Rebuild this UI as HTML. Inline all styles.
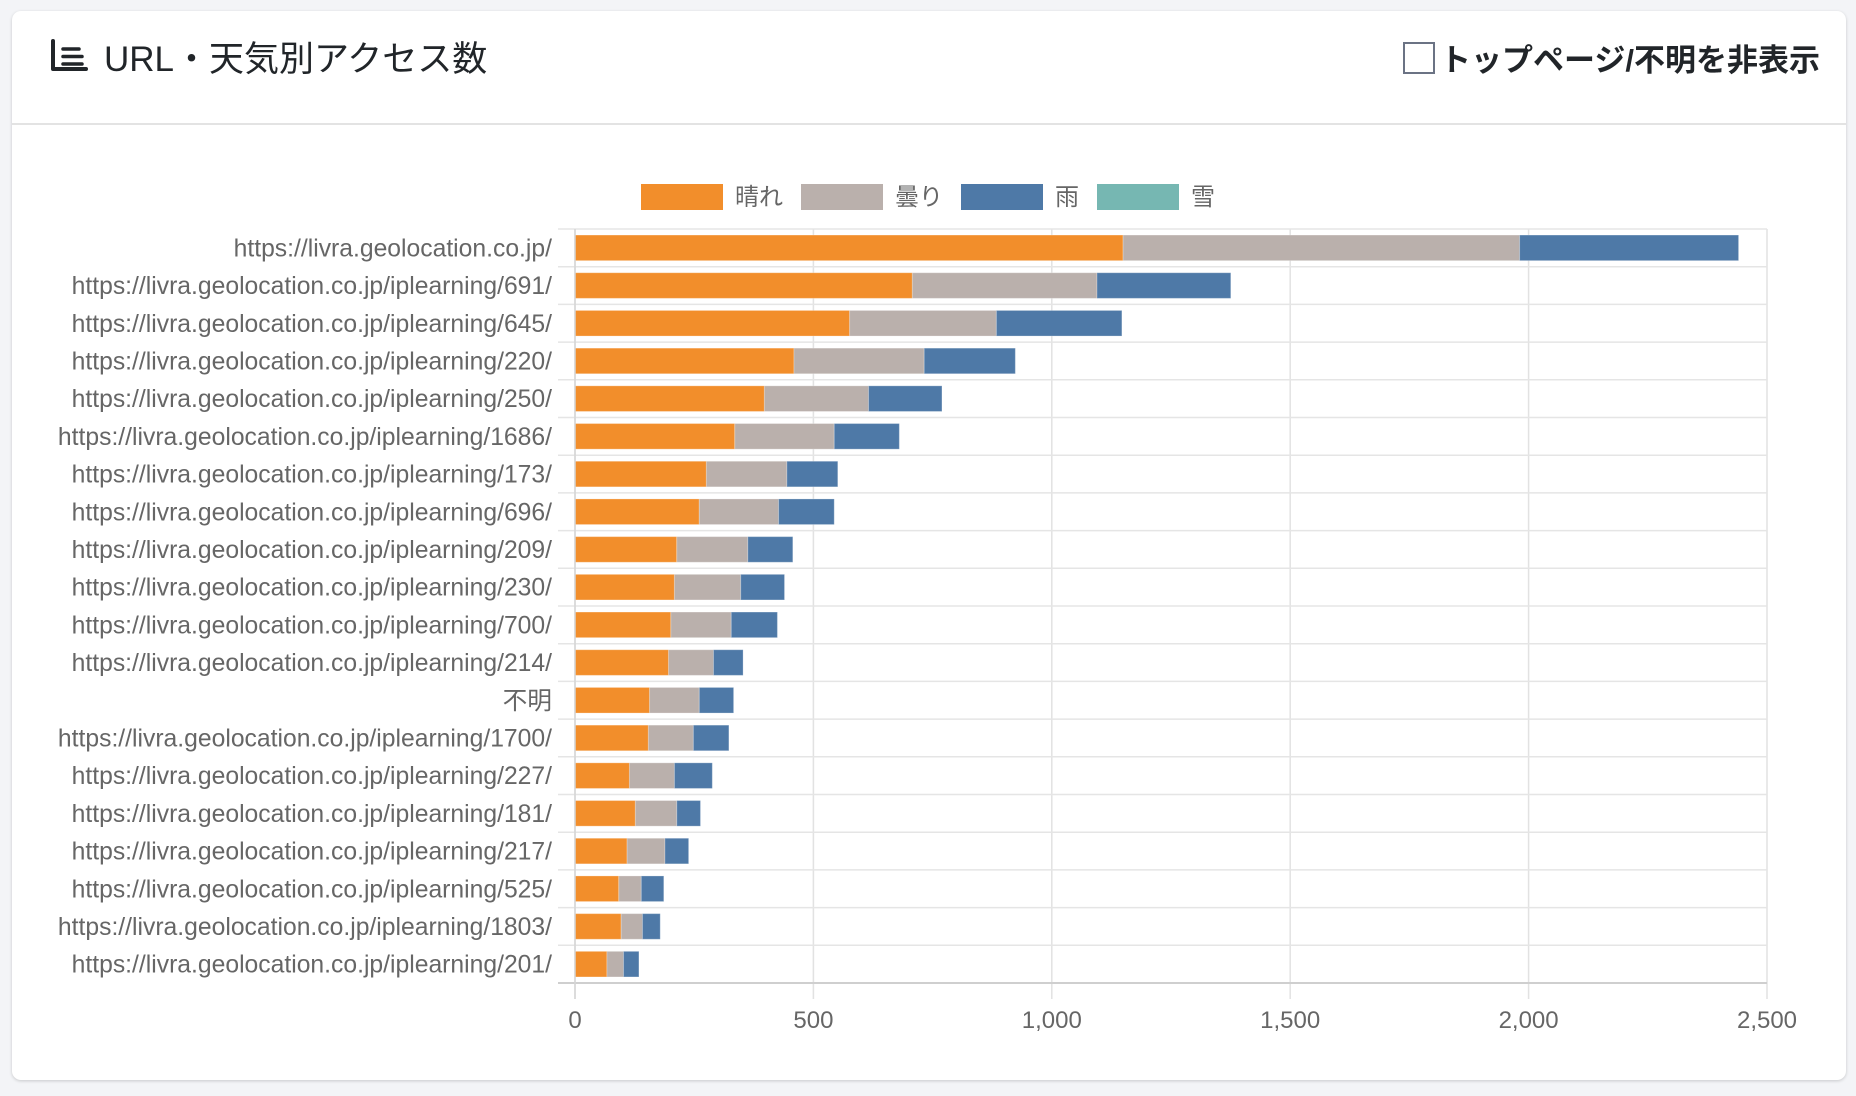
<!DOCTYPE html>
<html><head><meta charset="utf-8">
<style>
html,body{margin:0;padding:0;background:#f3f4f7;width:1856px;height:1096px;overflow:hidden;}
.card{position:absolute;left:12px;top:11px;width:1834px;height:1069px;background:#fff;border-radius:9px;box-shadow:0 1px 3px rgba(0,0,0,.18);}
.hdr{position:absolute;left:0;top:0;width:1834px;height:112px;border-bottom:2px solid #e3e3e3;}
.title{position:absolute;left:92px;top:20px;font:35px "Liberation Sans","Noto Sans CJK JP",sans-serif;color:#212529;white-space:nowrap;}
.chk{position:absolute;left:1391px;top:31px;width:28px;height:28px;border:2px solid #6b7384;background:#fff;}
.opt{position:absolute;left:1428px;top:24px;font:bold 31px "Liberation Sans","Noto Sans CJK JP",sans-serif;color:#212529;white-space:nowrap;}
svg{position:absolute;left:0;top:0;}
</style></head><body>
<div class="card">
<div class="hdr">
<svg width="90" height="80" style="left:0;top:0"><path d="M41 30 V58 H74" fill="none" stroke="#212529" stroke-width="4" stroke-linecap="round" stroke-linejoin="round"/><path d="M51 38 H67 M51 45.5 H70 M51 53 H70" fill="none" stroke="#212529" stroke-width="3.5" stroke-linecap="round"/></svg>
<div class="title">URL・天気別アクセス数</div>
<div class="chk"></div>
<div class="opt">トップページ/不明を非表示</div>
</div>
</div>
<svg id="c" width="1856" height="1096" font-family="Liberation Sans, Noto Sans CJK JP, sans-serif"></svg>
<script>
var labels=["https://livra.geolocation.co.jp/","https://livra.geolocation.co.jp/iplearning/691/","https://livra.geolocation.co.jp/iplearning/645/","https://livra.geolocation.co.jp/iplearning/220/","https://livra.geolocation.co.jp/iplearning/250/","https://livra.geolocation.co.jp/iplearning/1686/","https://livra.geolocation.co.jp/iplearning/173/","https://livra.geolocation.co.jp/iplearning/696/","https://livra.geolocation.co.jp/iplearning/209/","https://livra.geolocation.co.jp/iplearning/230/","https://livra.geolocation.co.jp/iplearning/700/","https://livra.geolocation.co.jp/iplearning/214/","不明","https://livra.geolocation.co.jp/iplearning/1700/","https://livra.geolocation.co.jp/iplearning/227/","https://livra.geolocation.co.jp/iplearning/181/","https://livra.geolocation.co.jp/iplearning/217/","https://livra.geolocation.co.jp/iplearning/525/","https://livra.geolocation.co.jp/iplearning/1803/","https://livra.geolocation.co.jp/iplearning/201/"];
var d=[[949,1284,1469],[771,927,1040],[718,842,948],[671,781,858],[646,734,796],[621,705,760],[597,665,708],[591,658,705],[572,632,670],[570,626,663],[567,618,657],[565,603,628],[549,591,620],[548,586,616],[532,570,602],[537,572,592],[530,562,582],[523,542,561],[525,543,558],[513,527,540]];
function X(v){return 575+(v-486)*1.1837;}
var s='',x0=575,T0=229,pitch=37.7,R=1767;
for(var k=0;k<=5;k++){var gx=x0+k*238.4;s+='<line x1="'+gx+'" y1="'+T0+'" x2="'+gx+'" y2="999" stroke="#e2e2e2" stroke-width="1.5"/>';
s+='<text x="'+gx+'" y="1028" font-size="24" fill="#666" text-anchor="middle">'+(k*500).toLocaleString('en-US')+'</text>';}
for(var i=0;i<=20;i++){var y=T0+i*pitch;s+='<line x1="558" y1="'+y+'" x2="'+R+'" y2="'+y+'" stroke="'+(i==20?'#cfcfcf':'#e5e5e5')+'" stroke-width="'+(i==20?2:1.5)+'"/>';}
var cols=["#f28e2b","#bab0ac","#4e79a7"];
for(var i=0;i<20;i++){var cy=T0+i*pitch+pitch/2;var by=cy-12.8,bh=25.6;var prev=x0;
for(var j=0;j<3;j++){var e=X(d[i][j]);s+='<rect x="'+prev+'" y="'+by+'" width="'+(e-prev)+'" height="'+bh+'" fill="'+cols[j]+'" stroke="rgba(255,255,255,0.25)" stroke-width="1"/>';prev=e;}
s+='<text x="552" y="'+(cy+8.5)+'" font-size="24.7" fill="#666" text-anchor="end">'+labels[i]+'</text>';}
var lg=[[641,"晴れ","#f28e2b"],[801,"曇り","#bab0ac"],[961,"雨","#4e79a7"],[1097,"雪","#76b7b2"]];
lg.forEach(function(l){s+='<rect x="'+l[0]+'" y="184" width="82" height="26" fill="'+l[2]+'"/><text x="'+(l[0]+94)+'" y="205" font-size="24" fill="#666">'+l[1]+'</text>';});
s+='<line x1="'+x0+'" y1="'+T0+'" x2="'+x0+'" y2="999" stroke="#d5d5d5" stroke-width="1.5"/>';
document.getElementById('c').innerHTML=s;
</script>
</body></html>
